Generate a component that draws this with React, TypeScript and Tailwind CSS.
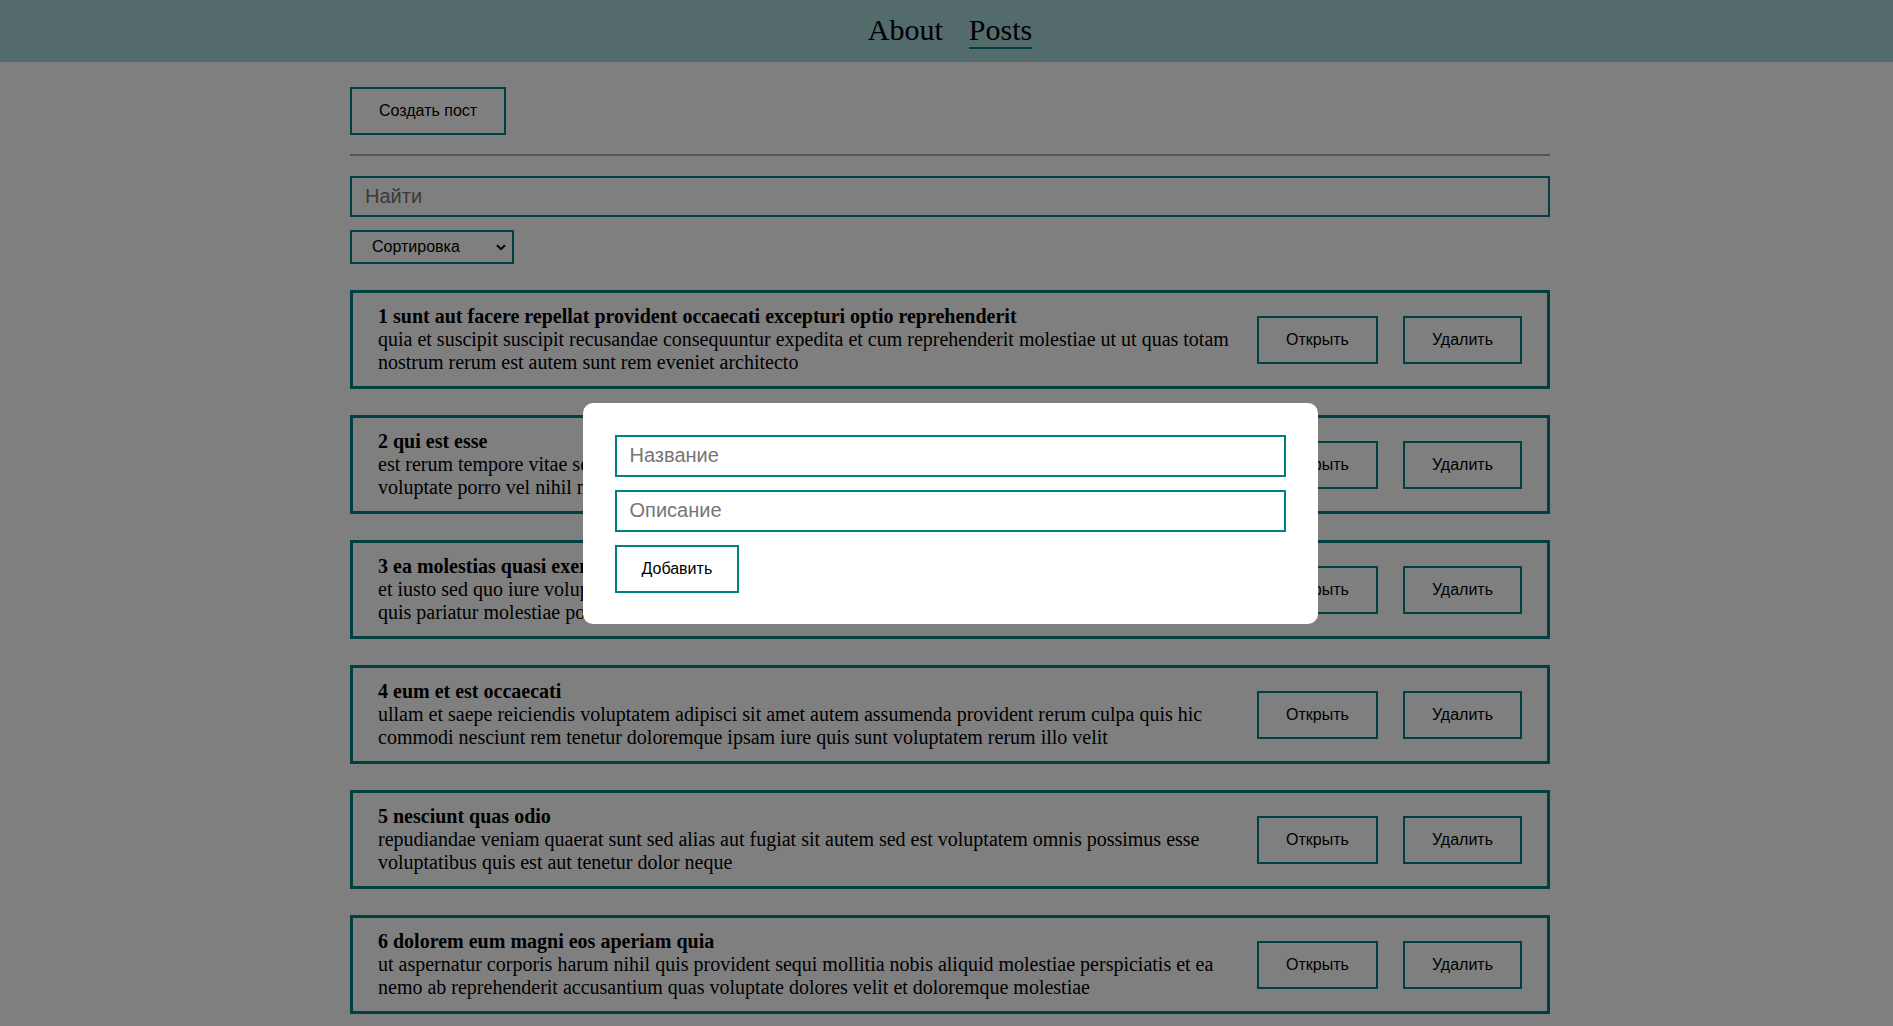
import { useState } from 'react';

interface Post { id: number; title: string; body: string; }

const posts: Post[] = [
  { id: 1, title: 'sunt aut facere repellat provident occaecati excepturi optio reprehenderit', body: 'quia et suscipit suscipit recusandae consequuntur expedita et cum reprehenderit molestiae ut ut quas totam nostrum rerum est autem sunt rem eveniet architecto' },
  { id: 2, title: 'qui est esse', body: 'est rerum tempore vitae sequi sint nihil reprehenderit dolor beatae ea dolores neque fugiat blanditiis voluptate porro vel nihil molestiae ut reiciendis qui aperiam non debitis possimus qui neque nisi nulla' },
  { id: 3, title: 'ea molestias quasi exercitationem repellat qui ipsa sit aut', body: 'et iusto sed quo iure voluptatem occaecati omnis eligendi aut ad voluptatem doloribus vel accusantium quis pariatur molestiae porro eius odio et labore et velit aut' },
  { id: 4, title: 'eum et est occaecati', body: 'ullam et saepe reiciendis voluptatem adipisci sit amet autem assumenda provident rerum culpa quis hic commodi nesciunt rem tenetur doloremque ipsam iure quis sunt voluptatem rerum illo velit' },
  { id: 5, title: 'nesciunt quas odio', body: 'repudiandae veniam quaerat sunt sed alias aut fugiat sit autem sed est voluptatem omnis possimus esse voluptatibus quis est aut tenetur dolor neque' },
  { id: 6, title: 'dolorem eum magni eos aperiam quia', body: 'ut aspernatur corporis harum nihil quis provident sequi mollitia nobis aliquid molestiae perspiciatis et ea nemo ab reprehenderit accusantium quas voluptate dolores velit et doloremque molestiae' },
  { id: 7, title: 'magnam facilis autem', body: 'dolore placeat quibusdam ea quo vitae magni quis enim qui quis quo nemo aut saepe quidem repellat excepturi ut quia sunt ut sequi eos ea sed quas' },
  { id: 8, title: 'dolorem dolore est ipsam', body: 'dignissimos aperiam dolorem qui eum facilis quibusdam animi sint suscipit qui sint possimus cum quaerat magni maiores excepturi ipsam ut commodi dolor voluptatum modi aut vitae' },
];

// shared look for bordered buttons; horizontal padding is set per button
const btn = 'h-[48px] border-2 border-[#008080] text-base text-black font-["Liberation_Sans",Arial,sans-serif]';
const field = 'w-full px-[13px] border-2 border-[#008080] bg-white text-[20px] font-["Liberation_Sans",Arial,sans-serif] outline-none placeholder:text-[#757575]';

export default function App() {
  const [query, setQuery] = useState('');
  const [title, setTitle] = useState('');
  const [desc, setDesc] = useState('');

  return (
    <div className="min-h-screen bg-white text-black font-['Liberation_Serif','Times_New_Roman',serif]">
      {/* Navbar */}
      <div className="h-[62px] bg-[#a8d6d6] pl-[7px] flex items-center justify-center gap-[26px]">
        <a className="text-[30px] leading-[1.15] border-b-2 border-transparent">About</a>
        <a className="text-[30px] leading-[1.15] border-b-2 border-[#008080]">Posts</a>
      </div>

      <div className="pl-[7px]">
        <div className="mx-auto w-[1200px] pt-[25px] pb-10">
          <button className={`${btn} px-[27px]`}>Создать пост</button>
          <hr className="mt-[19px] mb-[20px] border-0 h-[2px] bg-[#aaaaaa]" />
          <input value={query} onChange={e => setQuery(e.target.value)} placeholder="Найти" className={`h-[41px] ${field}`} />

          <div className="relative mt-[13px] w-[164px]">
            <select className="appearance-none w-full h-[34px] pl-[20px] pr-8 border-2 border-[#008080] bg-white text-base font-['Liberation_Sans',Arial,sans-serif]">
              <option>Сортировка</option>
              <option>По названию</option>
              <option>По описанию</option>
            </select>
            <svg className="absolute right-[8px] top-[14px] pointer-events-none" width="10" height="7" viewBox="0 0 10 7">
              <path d="M1 1.2 L5 5.2 L9 1.2" fill="none" stroke="#000" strokeWidth="2" />
            </svg>
          </div>

          <div className="mt-[26px] flex flex-col gap-[26px]">
            {posts.map(p => (
              <div key={p.id} className="border-[3px] border-[#008080] px-[25px] py-[12px] flex items-center">
                <div className="flex-1 text-[20px] leading-[1.15]">
                  <strong>{p.id} {p.title}</strong>
                  <div>{p.body}</div>
                </div>
                <div className="ml-[27px] flex gap-[25px]">
                  <button className={`${btn} px-[27px]`}>Открыть</button>
                  <button className={`${btn} px-[27px]`}>Удалить</button>
                </div>
              </div>
            ))}
          </div>
        </div>
      </div>

      {/* Modal */}
      <div className="fixed inset-0 bg-black/50 pl-[7px] flex items-center justify-center">
        <div className="w-[735px] bg-white rounded-[10px] px-8 pt-8 pb-[31px]">
          <input value={title} onChange={e => setTitle(e.target.value)} placeholder="Название" className={`block h-[42px] ${field}`} />
          <input value={desc} onChange={e => setDesc(e.target.value)} placeholder="Описание" className={`block mt-[13px] h-[42px] ${field}`} />
          <button className={`mt-[13px] bg-white ${btn} px-[25px]`}>Добавить</button>
        </div>
      </div>
    </div>
  );
}
